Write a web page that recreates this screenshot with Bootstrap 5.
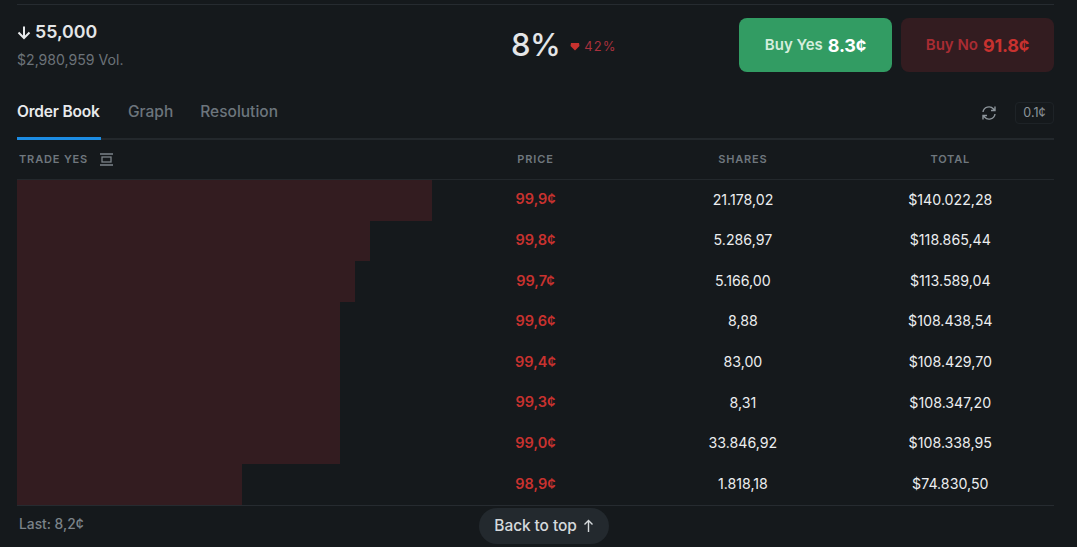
<!DOCTYPE html>
<html lang="en">
<head>
    <meta charset="UTF-8">
    <meta name="viewport" content="width=device-width, initial-scale=1.0">
    <title>Order Book</title>
    <link href="https://cdn.jsdelivr.net/npm/bootstrap@5.3.0/dist/css/bootstrap.min.css" rel="stylesheet">
    <style>
        html, body { height: 100%; }
        body { background: #15191c; color: #e4e6e8; font-family: Inter, "Liberation Sans", sans-serif; overflow: hidden; }
        .market-wrap { padding: 4px 23px 0 17px; }
        .top-line { border-top: 1px solid #262b30; height: 14px; }
        .head-row { height: 55px; }
        .head-left { width: 415px; padding-top: 0; }
        .strike { font-size: 17.8px; font-weight: 600; line-height: 28px; }
        .vol { font-size: 14.1px; color: #6c7379; line-height: 24px; margin-top: 2px; }
        .chance { width: 305px; padding-left: 79px; padding-bottom: 1px; }
        .chance-num { font-size: 31px; font-weight: 500; line-height: 48px; letter-spacing: -.5px; }
        .chance-delta { font-size: 13px; color: #a8313d; letter-spacing: 1px; margin-left: 10px; margin-top: 3px; }
        .btn-yes, .btn-no { height: 54px; border: 0; border-radius: 8px; font-size: 15px; font-weight: 600; padding: 0; display: flex; align-items: center; justify-content: center; gap: 5px; }
        .btn-yes { width: 153px; background: #329c63; color: #d5eedd; margin-left: 2px; }
        .btn-no { width: 153px; background: #331c20; color: #a92c33; margin-left: 9px; }
        .btn-yes b, .btn-no b { font-size: 18px; font-weight: 700; letter-spacing: -.2px; }
        .btn-yes b { color: #fff; }
        .btn-no b { color: #c8322f; }
        .tabs-row { height: 67px; border-bottom: 2px solid #23282c; padding-top: 17px; }
        .tab-item { font-size: 15.5px; font-weight: 500; color: #6c757c; margin-right: 27px; height: 50px; padding-top: 10px; line-height: 24px; }
        .tab-item.on { color: #e8eaec; font-weight: 600; border-bottom: 3px solid #1c8ce3; width: 84px; white-space: nowrap; letter-spacing: -.2px; }
        .tick-wrap { padding-top: 12px; }
        .tick-wrap svg { margin-top: 3px; }
        .tick { border: 1px solid #1e2327; border-radius: 4px; font-size: 12.5px; color: #8d959b; padding: 0 3px; height: 22px; line-height: 20px; width: 39px; text-align: center; margin-left: 18px; }
        .book-grid { display: grid; grid-template-columns: 2fr 1fr 1fr 1fr; }
        .book-head { height: 40px; border-bottom: 1px solid #23282c; font-size: 11px; font-weight: 600; letter-spacing: .85px; color: #6f777e; align-items: center; text-align: center; }
        .book-head .trade { text-align: left; padding-left: 2px; display: flex; align-items: center; gap: 12px; }
        .book-row { height: 40.6px; font-size: 14.2px; text-align: center; align-items: center; color: #eceef0; }
        .book-row > div + div { padding-bottom: 2px; }
        .depth { height: 100%; background: #331c20; }
        .price { color: #c8322f; font-weight: 600; font-size: 14.5px; }
        .book-foot { border-top: 1px solid #262b30; height: 41px; font-size: 13.8px; font-weight: 500; color: #7b8389; padding: 8px 0 0 2px; position: relative; }
        .to-top { position: absolute; left: 462px; top: 2px; height: 36px; width: 130px; border-radius: 18px; background: #23292e; color: #d5d9dc; font-size: 15.5px; font-weight: 500; display: flex; align-items: center; justify-content: center; gap: 6px; letter-spacing: -.1px; }
    </style>
</head>
<body>
    <div class="market-wrap">
        <div class="top-line"></div>
        <div class="d-flex head-row">
            <div class="head-left">
                <div class="strike d-flex align-items-center gap-1">
                    <svg width="14" height="15" viewBox="0 0 14 15" fill="none" stroke="#e8eaec" stroke-width="2"><path d="M7 1.500V13M1.500 7.500 7 13l5.500-5.500"/></svg>
                    <span>55,000</span>
                </div>
                <div class="vol">$2,980,959 Vol.</div>
            </div>
            <div class="chance d-flex align-items-center">
                <span class="chance-num">8%</span>
                <span class="chance-delta d-flex align-items-center gap-1">
                    <svg width="10" height="9" viewBox="0 0 10 9"><path d="M1 1h8l.5 3L5 8.500.5 4z" fill="#c8322f"/></svg>
                    42%
                </span>
            </div>
            <button class="btn-yes">Buy Yes <b>8.3¢</b></button>
            <button class="btn-no">Buy No <b>91.8¢</b></button>
        </div>
        <div class="tabs-row d-flex">
            <div class="tab-item on">Order Book</div>
            <div class="tab-item">Graph</div>
            <div class="tab-item">Resolution</div>
            <div class="ms-auto d-flex align-items-start tick-wrap">
                <svg width="16" height="16" viewBox="0 0 16 16" fill="none" stroke="#8d959b" stroke-width="1.4"><path d="M2 7a6 6 0 0 1 10.500-3L14 5.500M14 1.500v4h-4M14 9a6 6 0 0 1-10.500 3L2 10.500M2 14.500v-4h4"/></svg>
                <div class="tick">0.1¢</div>
            </div>
        </div>
        <div class="book-grid book-head">
            <div class="trade">TRADE YES
                <svg width="13" height="13" viewBox="0 0 13 13" fill="none" stroke="#7b8389" stroke-width="1.3"><path d="M0 1h13M0 12h13"/><rect x="2" y="4" width="9" height="5"/></svg>
            </div>
            <div>PRICE</div>
            <div>SHARES</div>
            <div>TOTAL</div>
        </div>
        <div id="book"></div>
        <div class="book-foot">Last: 8,2¢
            <div class="to-top">Back to top
                <svg width="11" height="14" viewBox="0 0 11 14" fill="none" stroke="#d5d9dc" stroke-width="1.4"><path d="M5.500 13V1.500M1.500 5.500l4-4 4 4"/></svg>
            </div>
        </div>
    </div>
    <script src="https://cdn.jsdelivr.net/npm/bootstrap@5.3.0/dist/js/bootstrap.bundle.min.js"></script>
    <script>
        const rows = [
            [415, '99,9¢', '21.178,02', '$140.022,28'],
            [353, '99,8¢', '5.286,97', '$118.865,44'],
            [338, '99,7¢', '5.166,00', '$113.589,04'],
            [323, '99,6¢', '8,88', '$108.438,54'],
            [323, '99,4¢', '83,00', '$108.429,70'],
            [323, '99,3¢', '8,31', '$108.347,20'],
            [323, '99,0¢', '33.846,92', '$108.338,95'],
            [225, '98,9¢', '1.818,18', '$74.830,50']
        ];
        document.getElementById('book').innerHTML = rows.map(r => `
            <div class="book-grid book-row">
                <div class="h-100"><div class="depth" style="width:${r[0]}px"></div></div>
                <div class="price">${r[1]}</div>
                <div>${r[2]}</div>
                <div>${r[3]}</div>
            </div>`).join('');
    </script>
</body>
</html>
